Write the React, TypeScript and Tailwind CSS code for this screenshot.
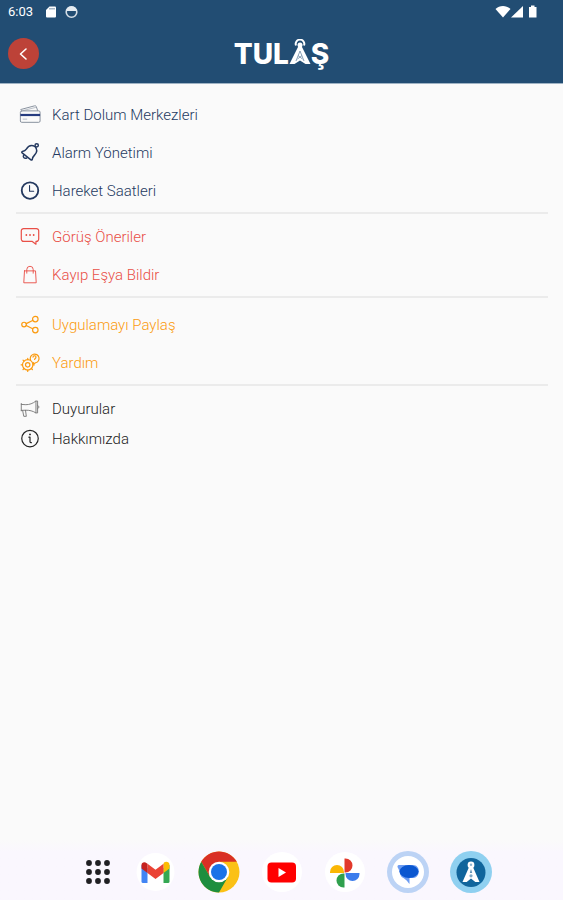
import React from 'react';

interface IconProps {
  className?: string;
}

const stroke = {
  fill: 'none',
  stroke: 'currentColor',
  strokeLinecap: 'round',
  strokeLinejoin: 'round',
} as const;

const CardIcon = ({ className }: IconProps) => (
  <svg viewBox="0 0 24 24" className={className} {...stroke} strokeWidth={1}>
    <path d="M2 6 17 2c1-.2 1.700.1 1.900 1l1.400 4" stroke="#7f8997" />
    <path d="M5 7 18 3.800" stroke="#b3bac4" />
    <rect x="1.500" y="7.500" width="21.500" height="12.500" rx="1.500" stroke="#7f8997" />
    <path d="M1.500 12h21.500" stroke="#263c80" strokeWidth={2.400} strokeLinecap="butt" />
    <path d="M4.500 16.500h4" stroke="#b3bac4" />
  </svg>
);

const BellIcon = ({ className }: IconProps) => (
  <svg viewBox="0 0 24 24" className={className} {...stroke} strokeWidth={1.600}>
    <path d="M17.500 5C13.500 2.800 10 4.500 8 7.800 6.800 9.800 5.800 10 3.700 10.300c-.8.200-.9 1.100-.3 1.600l9.600 7.600c.7.500 1.400.2 1.500-.6.100-2 .8-3 2.400-4.600 2.900-2.900 3.600-5.800.6-9.300Z" />
    <circle cx="19.300" cy="3.600" r="1.800" />
    <path d="M5 14.500c-1 2.200.8 4 3.500 3" />
  </svg>
);

const ClockIcon = ({ className }: IconProps) => (
  <svg viewBox="0 0 24 24" className={className} {...stroke}>
    <circle cx="12" cy="11.500" r="9" strokeWidth={2} />
    <path d="M11.500 6v6.200h4.500" strokeWidth={1.200} />
  </svg>
);

const ChatIcon = ({ className }: IconProps) => (
  <svg viewBox="0 0 24 24" className={className} {...stroke} strokeWidth={1.300}>
    <path d="M5 2.800h14A2.500 2.500 0 0 1 21.500 5.300v9a2.500 2.500 0 0 1-2.500 2.500H18.500v3l-4-3H5A2.500 2.500 0 0 1 2.500 14.300v-9A2.500 2.500 0 0 1 5 2.800Z" />
    <path d="M8 9.800h.01M12 9.800h.01M16 9.800h.01" strokeWidth={2} />
  </svg>
);

const BagIcon = ({ className }: IconProps) => (
  <svg viewBox="0 0 24 24" className={className} {...stroke} strokeWidth={1}>
    <path d="M6 7.500h12l.8 13H5.200L6 7.500Z" />
    <path d="M8.500 10V6a3.500 3.500 0 0 1 7 0v4" />
  </svg>
);

const ShareIcon = ({ className }: IconProps) => (
  <svg viewBox="0 0 24 24" className={className} {...stroke} strokeWidth={1.300}>
    <circle cx="5.500" cy="11.500" r="2.500" />
    <circle cx="17.800" cy="5.500" r="3" />
    <circle cx="17.800" cy="17.500" r="3" />
    <path d="m7.900 10.500 7-3.500M7.900 12.500l7 3.500" />
  </svg>
);

const HelpIcon = ({ className }: IconProps) => (
  <svg viewBox="0 0 24 24" className={className} {...stroke} strokeWidth={1.300}>
    <circle cx="9.500" cy="14" r="5.700" />
    <circle cx="9.500" cy="14" r="2.400" />
    <path d="M9.500 8.300V6.800M3.800 14H2.300M5.500 10 4.400 8.900M5.500 18l-1.100 1.100M9.500 19.700v1.500M13.500 18l1.100 1.100M15.200 14h1.500" />
    <path d="M12.500 8.500a4.800 4.800 0 1 1 5.700 3.200l-2.500 1.500v-1.700" />
    <path d="M15.300 5.500a1.600 1.600 0 1 1 2.200 1.700l-.5.900" />
  </svg>
);

const MegaphoneIcon = ({ className }: IconProps) => (
  <svg viewBox="0 0 24 24" className={className} {...stroke} strokeWidth={1} stroke="#777">
    <path d="M2.500 6v8M2.500 7 7.500 7.300c4 0 7.500-1.300 11-4v13c-3.500-2.200-7-3-11-3l-5 .2" />
    <path d="M18.500 3.300h1.800v13h-1.800M20.300 8c1.900.5 1.900 3.200 0 3.700M4 13.700l1.200 6.300H8l-.9-6.500" />
  </svg>
);

const InfoIcon = ({ className }: IconProps) => (
  <svg viewBox="0 0 24 24" className={className} {...stroke} strokeWidth={1.300}>
    <circle cx="12" cy="11.500" r="9" />
    <path d="M12 7h.01" strokeWidth={2} />
    <path d="M10.800 10H12v5c0 .8.500 1 1.500 1" />
  </svg>
);

type Item = { label: string; icon: React.FC<IconProps> };

const sections: { color: string; spacing: string; row: string; items: Item[] }[] = [
  {
    color: 'text-[#24395f]',
    spacing: 'pt-3 pb-0.5',
    row: 'h-[38px]',
    items: [
      { label: 'Kart Dolum Merkezleri', icon: CardIcon },
      { label: 'Alarm Yönetimi', icon: BellIcon },
      { label: 'Hareket Saatleri', icon: ClockIcon },
    ],
  },
  {
    color: 'text-[#e94f47]',
    spacing: 'pt-1 pb-0.5',
    row: 'h-[38px]',
    items: [
      { label: 'Görüş Öneriler', icon: ChatIcon },
      { label: 'Kayıp Eşya Bildir', icon: BagIcon },
    ],
  },
  {
    color: 'text-[#fb9b10]',
    spacing: 'pt-2 pb-0.5',
    row: 'h-[38px]',
    items: [
      { label: 'Uygulamayı Paylaş', icon: ShareIcon },
      { label: 'Yardım', icon: HelpIcon },
    ],
  },
  {
    color: 'text-[#222222]',
    spacing: 'pt-2',
    row: 'h-[30px]',
    items: [
      { label: 'Duyurular', icon: MegaphoneIcon },
      { label: 'Hakkımızda', icon: InfoIcon },
    ],
  },
];

const StatusBar = () => (
  <div className="flex h-6 items-center justify-between pl-2 pr-6 text-white">
    <div className="flex items-center gap-2">
      <span className="mr-1 text-[13px] leading-6">6:03</span>
      <svg viewBox="0 0 12 12" className="h-3 w-3">
        <path d="M4.500.5H10a1 1 0 0 1 1 1v9a1 1 0 0 1-1 1H2a1 1 0 0 1-1-1V4L4.500.5Z" fill="#fff" />
        <path d="M5 2v1.500M7 2v1.500M9 2v1.500" stroke="#224d73" strokeWidth=".8" />
      </svg>
      <svg viewBox="0 0 14 14" className="h-[14px] w-[14px]">
        <circle cx="6.500" cy="7" r="5.300" fill="none" stroke="#d5dee6" strokeWidth="1.600" />
        <path d="M1.500 4.500a5.500 5.500 0 0 1 10 0v1.500H1.500Z" fill="#e6ecf1" />
        <path d="M3.500 6.500h6V8.500h-6z" fill="#224d73" />
      </svg>
    </div>
    <svg viewBox="0 0 44 14" className="h-[14px] w-11">
      <path d="M.5 4C4.500 0 11.500 0 15.500 4L8 12.500.5 4Z" fill="#fff" />
      <path d="M28 1V12.500H16L28 1Z" fill="#fff" />
      <path d="M34 2h2V.5h3.500V2h2v10.500H34Z" fill="#fff" />
    </svg>
  </div>
);

const Logo = () => (
  <h1
    aria-label="TULAŞ"
    className="flex items-center font-[Inter,'Open_Sans',sans-serif] text-[28px] font-extrabold leading-[34px] text-white"
  >
    <span>TUL</span>
    <svg viewBox="0 0 22 30" className="h-[30px] w-[22px]">
      <path d="m9 8-8.500 17h5L11 21.500l5.500 3.500h5L13 8Z" fill="#fff" />
      <path d="m11 12-4 10M11 12l4 10M9 16.500l4.500 3.500M13 16.500l-4.500 3.500" stroke="#6d8aa5" strokeWidth=".8" fill="none" />
      <path d="M7 6.500a4.300 4.300 0 1 1 8 0" stroke="#fff" strokeWidth="2" fill="none" />
      <circle cx="11" cy="6" r="2.500" fill="#fff" />
    </svg>
    <span>Ş</span>
  </h1>
);

const Header = () => (
  <header className="bg-[#224d73]">
    <StatusBar />
    <div className="grid h-[60px] grid-cols-[1fr_auto_1fr] items-center border-b border-[#9fb3c4] px-2">
      <button
        type="button"
        aria-label="Geri"
        className="flex h-[31px] w-[31px] items-center justify-center rounded-full bg-[#bd4238] text-white"
      >
        <svg viewBox="0 0 12 14" className="h-[14px] w-3" {...stroke} strokeWidth={1.600}>
          <path d="M8 2 2.500 7l5.500 5" />
        </svg>
      </button>
      <Logo />
    </div>
  </header>
);

const AppsIcon = () => (
  <svg viewBox="0 0 26 26" className="ml-[13px] h-[26px] w-[26px]" fill="#202023">
    {[4, 13, 22].map((y) => [4, 13, 22].map((x) => <circle key={`${x}-${y}`} cx={x} cy={y} r="2.900" />))}
  </svg>
);

const GmailIcon = () => (
  <svg viewBox="0 0 42 42" className="h-[42px] w-[42px]">
    <circle cx="20.500" cy="21" r="19" fill="#fff" />
    <path d="M6.500 14v16.500A1.500 1.500 0 0 0 8 32H12.500V17Z" fill="#4285f4" />
    <path d="M28.500 17v15h4.500a1.500 1.500 0 0 0 1.500-1.500V14Z" fill="#34a853" />
    <path d="M28.500 12.800V22l6-4.500V14c0-3-3.300-4-5.500-2.500Z" fill="#fbbc04" />
    <path d="M12.500 22v-9.200l8 6 8-6V22l-8 6Z" fill="#ea4335" />
    <path d="M6.500 14v3.500l6 4.500v-9.200l-.8-.6C9.500 10.500 6.500 11.500 6.500 14Z" fill="#c5221f" />
  </svg>
);

const ChromeIcon = () => (
  <svg viewBox="0 0 42 42" className="h-[42px] w-[42px]">
    <circle cx="21" cy="21" r="20.500" fill="#fbc116" />
    <path d="M3.250 10.750A20.500 20.500 0 0 1 38.750 10.750H21L12.100 26.100Z" fill="#d93025" />
    <path d="M3.250 10.750A20.500 20.500 0 0 0 21 41.500L29.900 26.100 21 31.200 12.100 26.100Z" fill="#1e8e3e" />
    <circle cx="21" cy="21" r="10.300" fill="#fff" />
    <circle cx="21" cy="21" r="8" fill="#1a73e8" />
  </svg>
);

const YoutubeIcon = () => (
  <svg viewBox="0 0 42 42" className="h-[42px] w-[42px]">
    <circle cx="21" cy="21" r="20" fill="#fff" />
    <rect x="6.500" y="11.500" width="28.500" height="20" rx="4" fill="#f00" />
    <path d="m17.500 17 7.500 4.500-7.500 4.500Z" fill="#fff" />
  </svg>
);

const PhotosIcon = () => (
  <svg viewBox="0 0 42 42" className="h-[42px] w-[42px]">
    <circle cx="21" cy="21" r="20" fill="#fff" />
    <path d="M20.500 7.500h1a7 7 0 0 1 0 14h-1Z" fill="#e2392b" />
    <path d="M35.500 22v1a7 7 0 0 1-14 0v-1Z" fill="#3b7cec" />
    <path d="M20.500 36.500h-1a7 7 0 0 1 0-14h1Z" fill="#2fa04d" />
    <path d="M6 22v-1a7 7 0 0 1 14 0v1Z" fill="#fbb704" />
  </svg>
);

const MessagesIcon = () => (
  <svg viewBox="0 0 42 42" className="h-[42px] w-[42px]">
    <circle cx="21" cy="21" r="21" fill="#bcd3f5" />
    <circle cx="21" cy="21" r="16" fill="#fff" />
    <path d="M12 14h14c7.500 0 8 12 .5 13h-4v6c-3-4-4.500-5-7-6.500C12.500 24.500 13 20 11 17c-1-1.500-.5-3 1-3Z" fill="#6b9bf2" />
    <ellipse cx="22" cy="20.500" rx="9.500" ry="6.500" fill="#0b57d0" />
  </svg>
);

const TulasIcon = () => (
  <svg viewBox="0 0 42 42" className="h-[42px] w-[42px]">
    <circle cx="21" cy="21" r="21" fill="#8fd0f0" />
    <circle cx="21" cy="21.500" r="14.500" fill="#10659c" />
    <path d="m19.500 15-7 16h4.200L21 27.500l4.300 3.500h4.200l-7-16Z" fill="#fff" />
    <circle cx="21" cy="14" r="3.400" fill="#fff" />
    <circle cx="21" cy="13.800" r="1.200" fill="#8fb6d0" />
    <path d="m21 18-1.200 4h2.400Z" fill="#5f91b4" />
    <circle cx="21" cy="24.800" r="1.600" fill="#7fa9c6" />
  </svg>
);

const dockApps = [
  { name: 'Uygulamalar', icon: AppsIcon },
  { name: 'Gmail', icon: GmailIcon },
  { name: 'Chrome', icon: ChromeIcon },
  { name: 'YouTube', icon: YoutubeIcon },
  { name: 'Fotoğraflar', icon: PhotosIcon },
  { name: 'Mesajlar', icon: MessagesIcon },
  { name: 'Tulaş', icon: TulasIcon },
];

const Dock = () => (
  <footer className="flex items-center justify-center gap-[21px] bg-linear-to-b from-[#fafafa] to-[#faf7fe] to-20% pb-[7px] pt-[11px]">
    {dockApps.map(({ name, icon: Icon }) => (
      <button key={name} type="button" aria-label={name} className="flex h-[42px] w-[42px] shrink-0 items-center">
        <Icon />
      </button>
    ))}
  </footer>
);

export default function App() {
  return (
    <div className="flex min-h-screen flex-col bg-[#fafafa] font-[Roboto,sans-serif]">
      <Header />
      <main className="flex-1">
        <nav className="flex flex-col pl-4 pr-[15px]">
          {sections.map((section) => (
            <ul
              key={section.items[0].label}
              className={`border-b-2 border-[#ebebeb] last:border-b-0 ${section.spacing} ${section.color}`}
            >
              {section.items.map(({ label, icon: Icon }) => (
                <li key={label}>
                  <a href="#" className={`flex items-center gap-[11px] pl-[3px] text-[15px] font-light ${section.row}`}>
                    <Icon className="h-[22px] w-[22px] shrink-0" />
                    {label}
                  </a>
                </li>
              ))}
            </ul>
          ))}
        </nav>
      </main>
      <Dock />
    </div>
  );
}
